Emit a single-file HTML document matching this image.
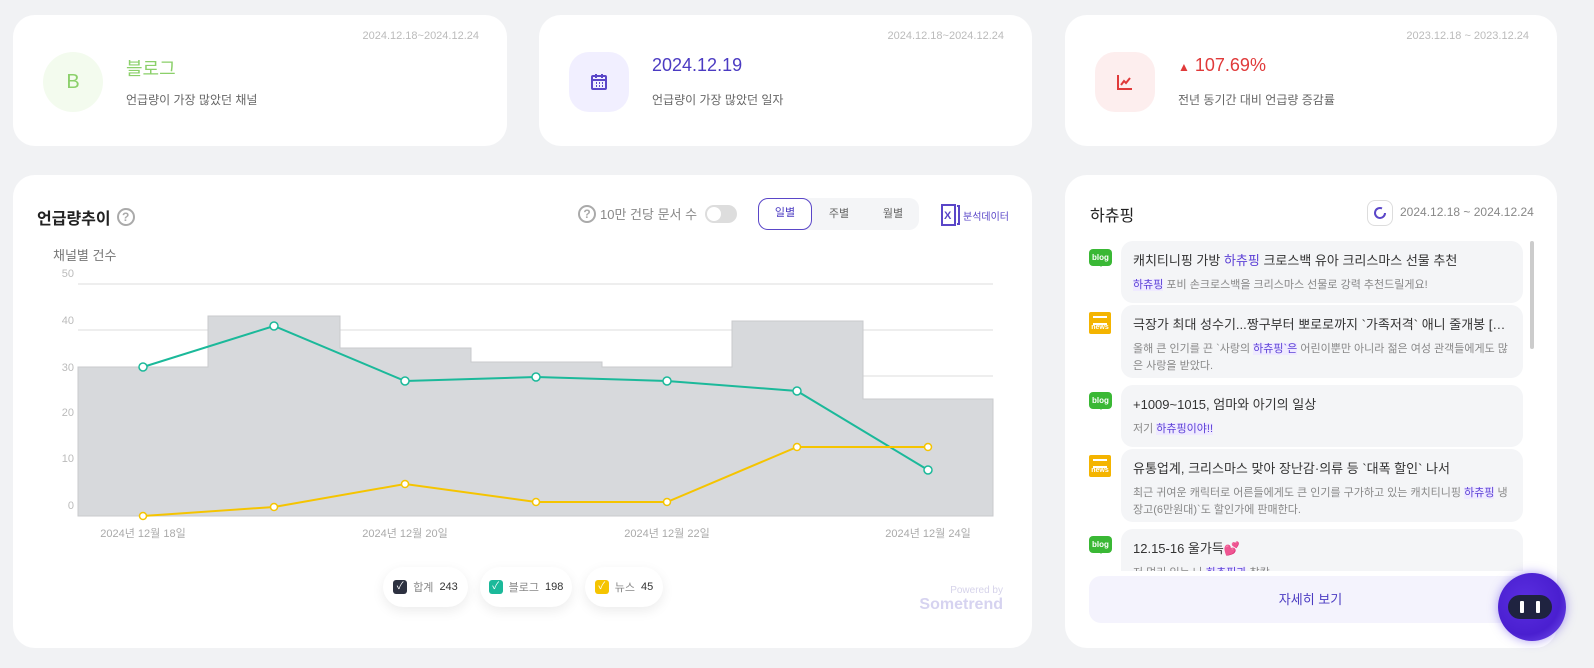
<!DOCTYPE html>
<html><head><meta charset="utf-8"><style>
*{box-sizing:border-box;margin:0;padding:0}
body{width:1594px;height:668px;background:#f1f2f4;font-family:"Liberation Sans","Noto Sans CJK KR",sans-serif;position:relative;overflow:hidden;color:#333}
.card{position:absolute;background:#fff;border-radius:22px}
.date{position:absolute;right:28px;top:15px;font-size:11px;color:#bbb}
.ic{position:absolute;left:30px;top:37px;width:60px;height:60px;border-radius:20px;display:flex;align-items:center;justify-content:center}
.big{position:absolute;left:113px;top:40px;font-size:18px}
.sub{position:absolute;left:113px;top:76px;font-size:12px;color:#666}
.abs{position:absolute}
.item{position:absolute;left:56px;width:402px;background:#f4f5f7;border-radius:12px;padding:9px 12px}
.item .t{font-size:13px;color:#333;white-space:nowrap;overflow:hidden;text-overflow:ellipsis}
.item .d{font-size:11px;color:#888;margin-top:8px;line-height:17px}
.hl{color:#5b3fd6;background:#efeaff}
.bl{position:absolute;left:24px;width:23px;height:17px;background:#3ab835;border-radius:4px;color:#fff;font-size:8px;font-weight:bold;text-align:center;line-height:17px}
.bl:after{content:"";position:absolute;left:9px;bottom:-4px;border:3px solid transparent;border-top:4px solid #3ab835}
.nw{position:absolute;left:24px;width:22px;height:22px;background:#f4b400;border-radius:2px;color:#fff;font-size:7px;font-weight:bold;text-align:center;padding-top:12px}
.nw:before{content:"";position:absolute;left:4px;top:4px;width:14px;height:5px;border-top:2px solid #fff;border-bottom:2px solid #fff}
.leg{position:absolute;top:392px;height:40px;background:#fff;border-radius:20px;box-shadow:0 4px 12px rgba(0,0,0,.08);font-size:11px;display:flex;align-items:center;justify-content:center;gap:6px;white-space:nowrap}
.cb{width:14px;height:14px;border-radius:3px;color:#fff;font-size:10px;text-align:center;line-height:14px}
.q{display:inline-block;width:18px;height:18px;border:2px solid #aaa;border-radius:50%;color:#aaa;font-size:12px;text-align:center;line-height:14px;font-weight:bold}
</style></head><body>

<div class="card" style="left:13px;top:15px;width:494px;height:131px">
<div class="date">2024.12.18~2024.12.24</div>
<div class="ic" style="background:#f3fbee;border-radius:50%;color:#8bd06a;font-size:20px">B</div>
<div class="big" style="color:#8bd06a">블로그</div>
<div class="sub">언급량이 가장 많았던 채널</div>
</div>
<div class="card" style="left:539px;top:15px;width:493px;height:131px">
<div class="date">2024.12.18~2024.12.24</div>
<div class="ic" style="background:#f1efff"><svg width="20" height="20" viewBox="0 0 20 20" fill="none" stroke="#5a46c8" stroke-width="2"><rect x="3" y="4" width="14" height="13" rx="1"/><path d="M3 8h14M7 2v4M13 2v4M7 11h1M10 11h1M13 11h1M7 14h1M10 14h1M13 14h1"/></svg></div>
<div class="big" style="color:#4b3bc2">2024.12.19</div>
<div class="sub">언급량이 가장 많았던 일자</div>
</div>
<div class="card" style="left:1065px;top:15px;width:492px;height:131px">
<div class="date">2023.12.18 ~ 2023.12.24</div>
<div class="ic" style="background:#fdeeee"><svg width="20" height="20" viewBox="0 0 20 20" fill="none" stroke="#e03a3a" stroke-width="2"><path d="M3 3v14h14M6 13l3-4 2 2 4-5"/></svg></div>
<div class="big" style="color:#e03a3a"><span style="font-size:12px">▲</span> 107.69%</div>
<div class="sub">전년 동기간 대비 언급량 증감률</div>
</div>

<div class="card" style="left:13px;top:175px;width:1019px;height:473px">
<div class="abs" style="left:24px;top:30px;font-size:16px;color:#222;font-weight:bold;display:flex;align-items:center;gap:6px">언급량추이 <span class="q">?</span></div>
<div class="abs" style="left:40px;top:70px;font-size:13px;color:#777">채널별 건수</div>
<div class="abs" style="left:565px;top:29px;font-size:13px;color:#888;display:flex;align-items:center;gap:4px"><span class="q">?</span>10만 건당 문서 수 <span style="display:inline-block;width:32px;height:18px;background:#ddd;border-radius:9px;position:relative;margin-left:4px"><span style="position:absolute;left:2px;top:2px;width:14px;height:14px;border-radius:50%;background:#fff"></span></span></div>
<div class="abs" style="left:745px;top:23px;width:161px;height:32px;background:#f4f5f7;border-radius:10px;font-size:11px;color:#666">
<div class="abs" style="left:0;top:0;width:54px;height:32px;border:1.5px solid #5a46c8;border-radius:10px;background:#fff;color:#4b3bc2;text-align:center;line-height:29px">일별</div>
<div class="abs" style="left:54px;top:0;width:54px;text-align:center;line-height:32px">주별</div>
<div class="abs" style="left:108px;top:0;width:54px;text-align:center;line-height:32px">월별</div></div>
<div class="abs" style="left:928px;top:29px;font-size:10px;color:#5a46c8;display:flex;align-items:center;gap:2px"><svg width="20" height="22" viewBox="0 0 20 22"><rect x="1" y="1" width="13" height="20" fill="none" stroke="#5a46c8" stroke-width="2"/><path d="M16 2h2v18h-2" fill="none" stroke="#5a46c8" stroke-width="2"/><text x="3" y="15" font-size="11" font-weight="bold" fill="#5a46c8" font-family="Liberation Sans">X</text></svg>분석데이터</div>
<div class="leg" style="left:370px;width:85px"><div class="cb" style="background:#2d3140">✓</div><span style="color:#888">합계</span><span>243</span></div>
<div class="leg" style="left:467px;width:92px"><div class="cb" style="background:#1bb99a">✓</div><span style="color:#888">블로그</span><span>198</span></div>
<div class="leg" style="left:572px;width:78px"><div class="cb" style="background:#f5c400">✓</div><span style="color:#888">뉴스</span><span>45</span></div>
<div class="abs" style="left:902px;top:410px;font-size:10px;color:#d6d3ea;text-align:right;width:88px">Powered by<br><span style="font-size:16px;color:#d6d3f0;font-weight:bold">Sometrend</span></div>
</div>

<svg class="abs" style="left:0;top:0" width="1040" height="560" font-family="Liberation Sans" font-size="11" fill="#bbb">
<g stroke="#ddd"><path d="M78 284H993M78 330H993M78 376H993M78 422H993M78 469H993"/></g>
<path d="M78 516V367H208V316H340V348H471V362H602V367H732V321H863V399H993V516Z" fill="#d7d9dc" stroke="#c8cacd"/>
<g fill="#bbb" text-anchor="end"><text x="74" y="277">50</text><text x="74" y="324">40</text><text x="74" y="371">30</text><text x="74" y="416">20</text><text x="74" y="462">10</text><text x="74" y="509">0</text></g>
<g text-anchor="middle" fill="#aaa"><text x="143" y="537">2024년 12월 18일</text><text x="405" y="537">2024년 12월 20일</text><text x="667" y="537">2024년 12월 22일</text><text x="928" y="537">2024년 12월 24일</text></g>
<polyline points="143,367 274,326 405,381 536,377 667,381 797,391 928,470" fill="none" stroke="#1bb99a" stroke-width="2"/>
<g fill="#fff" stroke="#1bb99a" stroke-width="1.5"><circle cx="143" cy="367" r="4"/><circle cx="274" cy="326" r="4"/><circle cx="405" cy="381" r="4"/><circle cx="536" cy="377" r="4"/><circle cx="667" cy="381" r="4"/><circle cx="797" cy="391" r="4"/><circle cx="928" cy="470" r="4"/></g>
<polyline points="143,516 274,507 405,484 536,502 667,502 797,447 928,447" fill="none" stroke="#f5c400" stroke-width="2"/>
<g fill="#fff" stroke="#f5c400" stroke-width="1.5"><circle cx="143" cy="516" r="3.5"/><circle cx="274" cy="507" r="3.5"/><circle cx="405" cy="484" r="3.5"/><circle cx="536" cy="502" r="3.5"/><circle cx="667" cy="502" r="3.5"/><circle cx="797" cy="447" r="3.5"/><circle cx="928" cy="447" r="3.5"/></g>
</svg>

<div class="card" style="left:1065px;top:175px;width:492px;height:473px;overflow:hidden">
<div class="abs" style="left:25px;top:27px;font-size:16px;color:#222">하츄핑</div>
<div class="abs" style="left:302px;top:25px;width:26px;height:26px;border:1px solid #ddd;border-radius:8px;display:flex;align-items:center;justify-content:center"><svg width="14" height="14" viewBox="0 0 14 14"><path d="M12 7A5 5 0 1 1 9 2.4" fill="none" stroke="#5a46c8" stroke-width="2"/></svg></div>
<div class="abs" style="left:335px;top:30px;font-size:12px;color:#888">2024.12.18 ~ 2024.12.24</div>
<div class="abs" style="left:0;top:66px;width:492px;height:330px;overflow:hidden">
<div class="bl" style="top:8px">blog</div>
<div class="item" style="top:0"><div class="t">캐치티니핑 가방 <span style="color:#5b3fd6">하츄핑</span> 크로스백 유아 크리스마스 선물 추천</div><div class="d"><span class="hl">하츄핑</span> 포비 손크로스백을 크리스마스 선물로 강력 추천드릴게요!</div></div>
<div class="nw" style="top:71px">news</div>
<div class="item" style="top:64px;height:73px"><div class="t">극장가 최대 성수기...짱구부터 뽀로로까지 `가족저격` 애니 줄개봉 [무비...</div><div class="d">올해 큰 인기를 끈 `사랑의 <span class="hl">하츄핑`은</span> 어린이뿐만 아니라 젊은 여성 관객들에게도 많은 사랑을 받았다.</div></div>
<div class="bl" style="top:151px">blog</div>
<div class="item" style="top:144px"><div class="t">+1009~1015, 엄마와 아기의 일상</div><div class="d">저기 <span class="hl">하츄핑이야!!</span></div></div>
<div class="nw" style="top:214px">news</div>
<div class="item" style="top:208px;height:73px"><div class="t">유통업계, 크리스마스 맞아 장난감·의류 등 `대폭 할인` 나서</div><div class="d">최근 귀여운 캐릭터로 어른들에게도 큰 인기를 구가하고 있는 캐치티니핑 <span class="hl">하츄핑</span> 냉장고(6만원대)`도 할인가에 판매한다.</div></div>
<div class="bl" style="top:295px">blog</div>
<div class="item" style="top:288px"><div class="t">12.15-16 울가득<span style="color:#e0457b">💕</span></div><div class="d">저 멀리 있는 나 <span class="hl">하츄핑과</span> 찰칵</div></div>
<div class="abs" style="left:465px;top:0;width:4px;height:108px;background:#ccc;border-radius:2px"></div>
</div>
<div class="abs" style="left:24px;top:401px;width:443px;height:47px;background:#f4f3fd;border-radius:12px;text-align:center;line-height:47px;font-size:13px;color:#4b3bc2">자세히 보기</div>
</div>
<div class="abs" style="left:1498px;top:573px;width:68px;height:68px;border-radius:50%;background:radial-gradient(circle at 40% 40%,#5a2ee0,#4a1fd0 60%,#7b5cf0);box-shadow:0 0 10px rgba(90,60,230,.5)"><div class="abs" style="left:10px;top:22px;width:44px;height:24px;border-radius:12px;background:#1f2340"><div class="abs" style="left:12px;top:6px;width:4px;height:12px;background:#fff;border-radius:1px"></div><div class="abs" style="left:28px;top:6px;width:4px;height:12px;background:#fff;border-radius:1px"></div></div></div>
</body></html>
